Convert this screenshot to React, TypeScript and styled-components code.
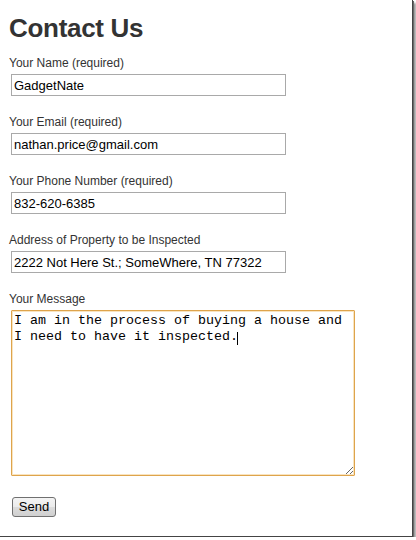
import React from 'react';
import styled, { createGlobalStyle } from 'styled-components';

const GlobalStyle = createGlobalStyle`
  html, body {
    margin: 0;
    padding: 0;
    background: #fff;
  }
  body {
    font-family: Arial, "Liberation Sans", sans-serif;
  }
`;

const Frame = styled.div`
  width: 413px;
  height: 537px;
  box-sizing: border-box;
  background: #fff;
  padding: 13px 0 0 9px;
  border-right: 1px solid #444;
  border-bottom: 1px solid #444;
  box-shadow: 1px 1px 0 #6a6a6a, 3px 3px 2px rgba(0, 0, 0, 0.4);
`;

const Title = styled.h1`
  margin: 0 0 13px;
  font-size: 26px;
  line-height: 30px;
  font-weight: bold;
  letter-spacing: -0.3px;
  color: #333;
`;

const Form = styled.form`
  display: flex;
  flex-direction: column;
  align-items: flex-start;
`;

const Field = styled.div`
  display: flex;
  flex-direction: column;
  align-items: flex-start;
  margin-bottom: ${(props: { gap?: number }) => props.gap ?? 19}px;
`;

const Label = styled.label`
  display: block;
  font-size: 12px;
  line-height: 15px;
  color: #333;
  margin-bottom: 3px;
`;

const Input = styled.input`
  box-sizing: border-box;
  width: 275px;
  height: 22px;
  margin: 0 0 0 2px;
  padding: 0 2px;
  border: 1px solid #a9a9a9;
  border-radius: 0;
  font-family: Arial, "Liberation Sans", sans-serif;
  font-size: 13px;
  color: #000;
  background: #fff;
  outline: none;
`;

const MessageBox = styled.div`
  position: relative;
  margin-left: 2px;
`;

const TextArea = styled.textarea`
  display: block;
  box-sizing: border-box;
  width: 344px;
  height: 166px;
  margin: 0;
  padding: 2px;
  border: 1px solid #dea44c;
  box-shadow: 0 0 0 1px rgba(244, 205, 140, 0.55) inset;
  border-radius: 1px;
  font-family: "Courier New", "Liberation Mono", monospace;
  font-size: 13.333px;
  line-height: 16px;
  color: #000;
  background: #fff;
  outline: none;
  resize: both;
`;

const Caret = styled.span`
  position: absolute;
  left: 226px;
  top: 22px;
  width: 1px;
  height: 13px;
  background: #000;
`;

const SendButton = styled.button`
  box-sizing: border-box;
  width: 44px;
  height: 20px;
  margin-left: 3px;
  padding: 0;
  border: 1px solid #707070;
  border-radius: 3px;
  background: linear-gradient(#f4f4f4 0%, #ebebeb 50%, #dcdcdc 51%, #d0d0d0 100%);
  font-family: Arial, "Liberation Sans", sans-serif;
  font-size: 13px;
  color: #000;
  line-height: 18px;
`;

const fields = [
  { label: 'Your Name (required)', value: 'GadgetNate' },
  { label: 'Your Email (required)', value: 'nathan.price@gmail.com' },
  { label: 'Your Phone Number (required)', value: '832-620-6385' },
  { label: 'Address of Property to be Inspected', value: '2222 Not Here St.; SomeWhere, TN 77322' },
];

export default function App() {
  return (
    <>
      <GlobalStyle />
      <Frame>
        <Title>Contact Us</Title>
        <Form onSubmit={e => e.preventDefault()}>
          {fields.map(f => (
            <Field key={f.label}>
              <Label>{f.label}</Label>
              <Input type="text" defaultValue={f.value} />
            </Field>
          ))}
          <Field gap={21}>
            <Label>Your Message</Label>
            <MessageBox>
              <TextArea
                defaultValue={'I am in the process of buying a house and I need to have it inspected.'}
              />
              <Caret />
            </MessageBox>
          </Field>
          <SendButton type="submit">Send</SendButton>
        </Form>
      </Frame>
    </>
  );
}
